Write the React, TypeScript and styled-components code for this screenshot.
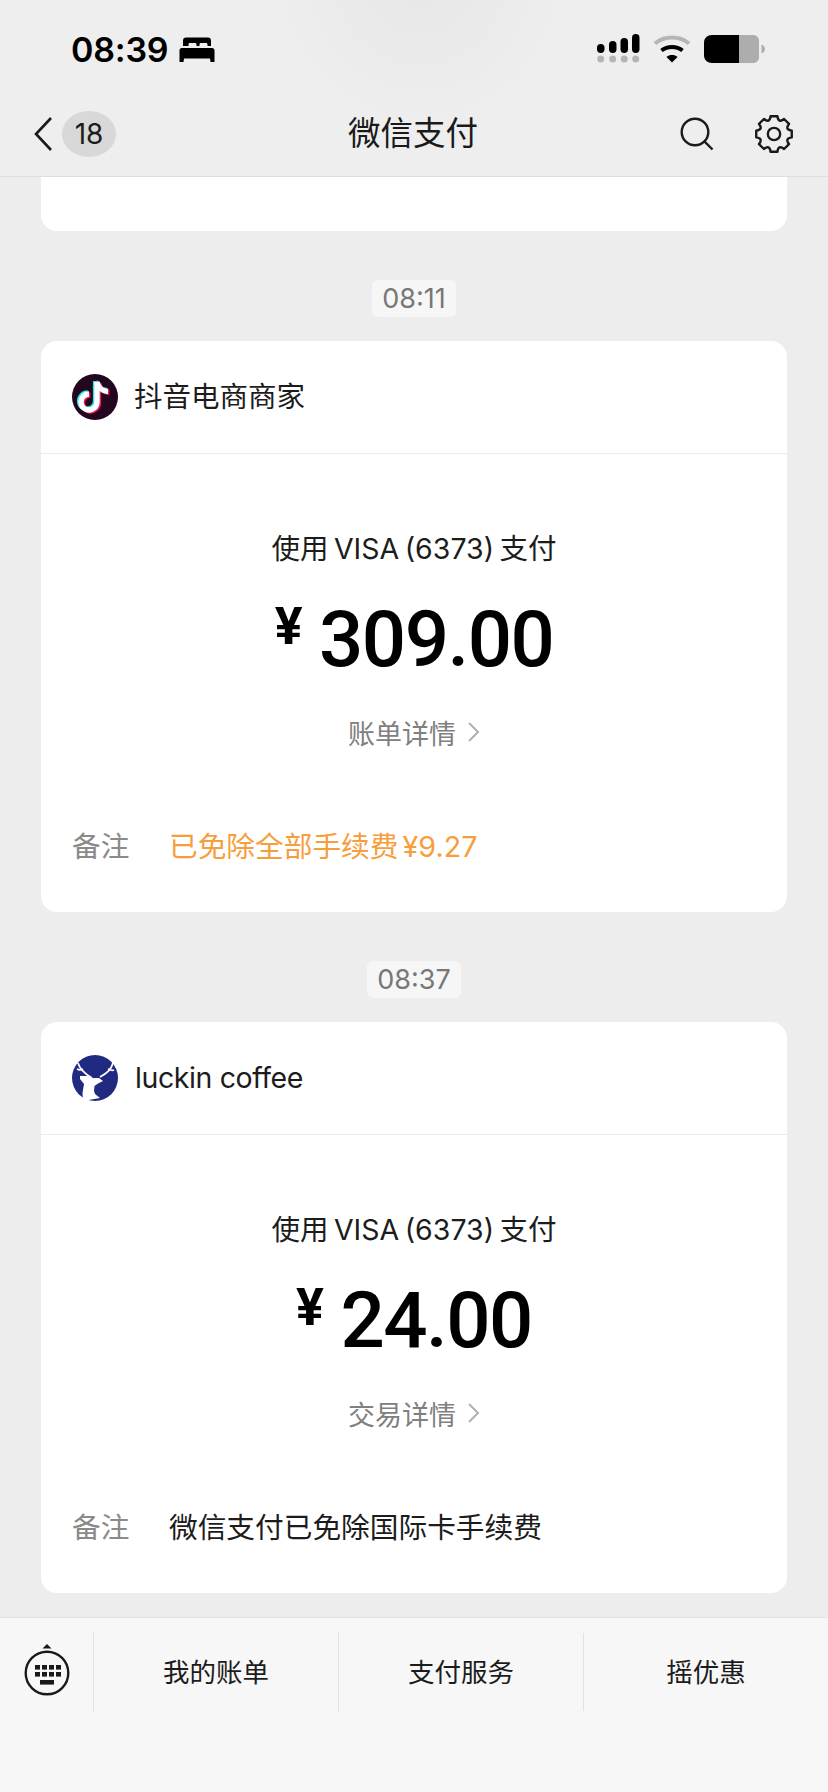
import React from "react";
import styled, { createGlobalStyle } from "styled-components";

const FONT = `Inter, "Noto Sans CJK SC", sans-serif`;

const Global = createGlobalStyle`
  html, body { margin: 0; padding: 0; background: #ededed; }
  * { box-sizing: border-box; }
`;

const payments = [
  {
    time: "08:11",
    merchant: "抖音电商商家",
    logo: "tiktok",
    amount: "309.00",
    link: "账单详情",
    note: "已免除全部手续费 ¥9.27",
    highlight: true,
  },
  {
    time: "08:37",
    merchant: "luckin coffee",
    logo: "luckin",
    amount: "24.00",
    link: "交易详情",
    note: "微信支付已免除国际卡手续费",
    highlight: false,
  },
];

export default function App() {
  return (
    <Page>
      <Global />
      <TopBar>
        <StatusBar>
          <Clock>
            08:39
            <BedIcon />
          </Clock>
          <StatusIcons>
            <SignalIcon />
            <WifiIcon />
            <BatteryIcon />
          </StatusIcons>
        </StatusBar>
        <NavBar>
          <NavLeft>
            <svg width="20" height="36" viewBox="0 0 20 36" fill="none">
              <path d="M18 2 3 18l15 16" stroke="#1a1a1a" strokeWidth="2.6" />
            </svg>
            <Badge>18</Badge>
          </NavLeft>
          <NavTitle>微信支付</NavTitle>
          <NavRight>
            <SearchIcon />
            <GearIcon />
          </NavRight>
        </NavBar>
      </TopBar>

      <Feed>
        <CutCard />
        {payments.map((p) => (
          <React.Fragment key={p.time}>
            <TimeStamp>{p.time}</TimeStamp>
            <Card>
              <CardHead>
                {p.logo === "tiktok" ? <TikTokLogo /> : <LuckinLogo />}
                <Merchant $latin={p.logo === "luckin"}>{p.merchant}</Merchant>
              </CardHead>
              <CardBody>
                <PayMethod>使用 VISA (6373) 支付</PayMethod>
                <Amount>
                  <Yuan>¥</Yuan>
                  {p.amount}
                </Amount>
                <DetailLink>
                  {p.link}
                  <svg width="13" height="22" viewBox="0 0 13 22" fill="none">
                    <path d="M2 2l9 9-9 9" stroke="#b0b0b0" strokeWidth="2" />
                  </svg>
                </DetailLink>
                <NoteRow>
                  <NoteLabel>备注</NoteLabel>
                  <NoteValue $highlight={p.highlight}>{p.note}</NoteValue>
                </NoteRow>
              </CardBody>
            </Card>
          </React.Fragment>
        ))}
      </Feed>

      <Footer>
        <MenuRow>
          <KeyboardCell>
            <KeyboardIcon />
          </KeyboardCell>
          <MenuItem>我的账单</MenuItem>
          <MenuItem>支付服务</MenuItem>
          <MenuItem>摇优惠</MenuItem>
        </MenuRow>
      </Footer>
    </Page>
  );
}

/* --- icons --- */

function BedIcon() {
  return (
    <svg width="36" height="26" viewBox="0 0 36 26" fill="#000">
      <path d="M4 3.5C4 1.5 5.2.5 7 .5h22c1.8 0 3 1 3 3V9h-3.5V7.5c0-1-.6-1.5-1.5-1.5h-5c-1 0-1.5.5-1.5 1.5V9h-3V7.5c0-1-.6-1.5-1.5-1.5H11c-1 0-1.5.5-1.5 1.5V9H4z" />
      <path d="M3 11h30c1.600 0 2.500 1 2.500 2.500V25h-4l-.5-3.500H5L4.500 25h-4V13.500C.5 12 1.400 11 3 11z" />
    </svg>
  );
}

function SignalIcon() {
  const bars = [
    { x: 0, y: 10, h: 9 },
    { x: 12, y: 7, h: 12 },
    { x: 23.500, y: 4, h: 15 },
    { x: 35, y: 0, h: 19 },
  ];
  return (
    <svg width="43" height="29" viewBox="0 0 43 29">
      {bars.map((b) => (
        <React.Fragment key={b.x}>
          <rect x={b.x} y={b.y} width="7.500" height={b.h} rx="3.700" fill="#000" />
          <circle cx={b.x + 3.700} cy="25" r="3.500" fill="#b5b5b5" />
        </React.Fragment>
      ))}
    </svg>
  );
}

function WifiIcon() {
  return (
    <svg width="38" height="29" viewBox="0 0 38 29" fill="none">
      <path d="M2 9.500C11.500 1.500 26.500 1.500 36 9.500" stroke="#b5b5b5" strokeWidth="4" />
      <path d="M8.500 16.500c6-4.800 15-4.800 21 0" stroke="#000" strokeWidth="4" />
      <path d="M19 28.500l-5.500-5.500c3-2.600 8-2.600 11 0z" fill="#000" />
    </svg>
  );
}

function BatteryIcon() {
  return (
    <svg width="62" height="28" viewBox="0 0 62 28">
      <path d="M35 0h14c3.500 0 6 2.500 6 6v16c0 3.500-2.500 6-6 6H35z" fill="#adadad" />
      <path d="M8 0h27v28H8c-4.500 0-8-3-8-7.500v-13C0 3 3.500 0 8 0z" fill="#000" />
      <path d="M57.500 9.500c2 .8 3.500 2.500 3.500 4.500s-1.500 3.700-3.500 4.500z" fill="#adadad" />
    </svg>
  );
}

function SearchIcon() {
  return (
    <svg width="34" height="34" viewBox="0 0 34 34" fill="none" stroke="#1a1a1a" strokeWidth="2.400">
      <circle cx="15" cy="15" r="13.300" />
      <path d="M24.500 24.500l8 8" />
    </svg>
  );
}

function GearIcon() {
  const teeth = [0, 45, 90, 135, 180, 225, 270, 315];
  const r = 19;
  const d = teeth
    .map((a, i) => {
      const point = (deg: number, rad: number) => {
        const t = (deg * Math.PI) / 180;
        return `${(20 + rad * Math.cos(t)).toFixed(1)} ${(20 + rad * Math.sin(t)).toFixed(1)}`;
      };
      return `${i === 0 ? "M" : "L"}${point(a - 11, r)} L${point(a + 11, r)} Q${point(a + 22.500, 12)} ${point(a + 34, r)}`;
    })
    .join(" ");
  return (
    <svg width="38" height="38" viewBox="0 0 40 40" fill="none" stroke="#1a1a1a" strokeWidth="2.500" strokeLinejoin="round">
      <path d={d + " Z"} />
      <circle cx="20" cy="20" r="6.500" />
    </svg>
  );
}

function TikTokLogo() {
  const note = "M25 8V28a8 8 0 1 1-8-8";
  const flag = "M25 8c1 5 5 9 11 9.500";
  const layer = (color: string, dx: number, dy: number) => (
    <g stroke={color} transform={`translate(${dx} ${dy})`}>
      <path d={note} />
      <path d={flag} />
    </g>
  );
  return (
    <svg width="46" height="46" viewBox="0 0 46 46" fill="none" strokeWidth="5.400">
      <circle cx="23" cy="23" r="23" fill="#22071f" />
      {layer("#2de4e6", -1.400, -1)}
      {layer("#f0164f", 1.400, 1)}
      {layer("#ffffff", 0, 0)}
    </svg>
  );
}

function LuckinLogo() {
  return (
    <svg width="47" height="46" viewBox="0 0 47 46" fill="none">
      <circle cx="23" cy="23" r="23" fill="#1f2a80" />
      <path
        d="M8 21h8l4 2h7l4 3-5 2.500-3.500 2.500-.5 5 1 3 5 4L11 46l-.5-8 1.500-9-4-5z"
        fill="#fff"
      />
      <g stroke="#fff" strokeWidth="1.800">
        <path d="M6 8c2 7 7 11 14 15" />
        <path d="M5 14c2 1 4 1 6 0" />
        <path d="M41 8c-2 7-6 10-13 14" />
        <path d="M42 15c-2 1-4 0-6-1" />
      </g>
    </svg>
  );
}

function KeyboardIcon() {
  const keys: [number, number][] = [];
  for (const y of [15, 22]) for (const x of [11, 18, 25, 32]) keys.push([x, y]);
  return (
    <svg width="46" height="52" viewBox="0 0 46 52" fill="none">
      <path d="M23 0l4.500 4.500h-9z" fill="#1a1a1a" />
      <circle cx="23" cy="29" r="21.300" stroke="#1a1a1a" strokeWidth="2.400" />
      <g transform="translate(0 6)" fill="#1a1a1a">
        {keys.map(([x, y]) => (
          <rect key={`${x}-${y}`} x={x} y={y} width="5" height="4.600" />
        ))}
        <rect x="16" y="30" width="14" height="4.600" />
      </g>
    </svg>
  );
}

/* --- styles --- */

const Page = styled.div`
  width: 828px;
  height: 1792px;
  display: flex;
  flex-direction: column;
  overflow: hidden;
  background: #ededed;
  font-family: ${FONT};
  color: #1a1a1a;
`;

const TopBar = styled.header`
  height: 177px;
  flex: none;
  border-bottom: 1px solid #dedede;
  background: radial-gradient(circle at 420px -20px, #e7e7e7 0, #ebebeb 90px, #eeeeee 150px);
`;

const StatusBar = styled.div`
  height: 92px;
  padding: 30px 62px 0 71px;
  display: flex;
  justify-content: space-between;
  align-items: flex-start;
`;

const Clock = styled.div`
  display: flex;
  align-items: center;
  gap: 11px;
  font-size: 34px;
  line-height: 40px;
  font-weight: 600;
  letter-spacing: -0.2px;
  color: #000;
`;

const StatusIcons = styled.div`
  display: flex;
  align-items: center;
  gap: 13px;
  padding-top: 4px;
`;

const NavBar = styled.nav`
  height: 84px;
  padding: 0 35px 0 33px;
  display: flex;
  align-items: center;
  justify-content: space-between;
  position: relative;
`;

const NavLeft = styled.div`
  display: flex;
  align-items: center;
  gap: 9px;
`;

const Badge = styled.span`
  width: 54px;
  height: 46px;
  border-radius: 50%;
  background: #d8d8d8;
  display: flex;
  align-items: center;
  justify-content: center;
  font-size: 28px;
  color: #1c1c1c;
`;

const NavTitle = styled.div`
  position: absolute;
  left: 0;
  right: 0;
  margin-left: -2px;
  text-align: center;
  font-size: 32.500px;
  line-height: 44px;
  pointer-events: none;
`;

const NavRight = styled.div`
  display: flex;
  align-items: center;
  gap: 41px;
`;

const Feed = styled.main`
  flex: 1;
  min-height: 0;
  padding: 0 41px;
  display: flex;
  flex-direction: column;
  align-items: center;
  overflow: hidden;
`;

const CutCard = styled.div`
  width: 100%;
  height: 54px;
  flex: none;
  background: #fff;
  border-radius: 0 0 16px 16px;
`;

const TimeStamp = styled.div`
  margin: 49px 0 24px;
  height: 37px;
  padding: 0 10px;
  flex: none;
  border-radius: 6px;
  background: #f6f6f6;
  display: flex;
  align-items: center;
  font-size: 27px;
  color: #777;
`;

const Card = styled.section`
  width: 100%;
  flex: none;
  background: #fff;
  border-radius: 16px;
`;

const CardHead = styled.div`
  height: 113px;
  padding: 0 31px;
  display: flex;
  align-items: center;
  gap: 16px;
  border-bottom: 1px solid #ececec;
`;

const Merchant = styled.div<{ $latin: boolean }>`
  font-size: 28.500px;
  line-height: 36px;
  letter-spacing: ${(p) => (p.$latin ? "-0.4px" : "0")};
  color: #1c1c1c;
`;

const CardBody = styled.div`
  height: 458px;
  padding-top: 77px;
  display: flex;
  flex-direction: column;
  align-items: center;
`;

const PayMethod = styled.div`
  font-size: 28.500px;
  line-height: 36px;
  word-spacing: -2.500px;
  color: #1c1c1c;
`;

const Amount = styled.div`
  margin-top: 27px;
  height: 90px;
  display: flex;
  align-items: center;
  font-family: Roboto, sans-serif;
  font-size: 78px;
  font-weight: 500;
  letter-spacing: -1.500px;
  color: #000;
`;

const Yuan = styled.span`
  font-size: 52px;
  font-weight: 700;
  line-height: 52px;
  margin: -24px 18px 0 0;
`;

const DetailLink = styled.div`
  margin-top: 30px;
  height: 36px;
  display: flex;
  align-items: center;
  gap: 11px;
  font-size: 27px;
  color: #808080;
`;

const NoteRow = styled.div`
  margin-top: 79px;
  width: 100%;
  padding: 0 31px;
  display: flex;
  align-items: center;
  font-size: 28.700px;
  line-height: 36px;
  word-spacing: -4px;
`;

const NoteLabel = styled.span`
  width: 97px;
  flex: none;
  color: #8a8a8a;
`;

const NoteValue = styled.span<{ $highlight: boolean }>`
  color: ${(p) => (p.$highlight ? "#f79d3c" : "#1c1c1c")};
`;

const Footer = styled.footer`
  height: 175px;
  flex: none;
  padding-top: 15px;
  background: #f7f7f7;
  border-top: 1px solid #e4e4e4;
`;

const MenuRow = styled.div`
  height: 78px;
  display: grid;
  grid-template-columns: 93px repeat(3, 245px);
`;

const KeyboardCell = styled.div`
  display: flex;
  align-items: center;
  justify-content: center;
  padding-bottom: 4px;
`;

const MenuItem = styled.div`
  display: flex;
  align-items: center;
  justify-content: center;
  padding-bottom: 4px;
  border-left: 1px solid #e2e2e2;
  font-size: 26.500px;
  color: #1c1c1c;
`;
